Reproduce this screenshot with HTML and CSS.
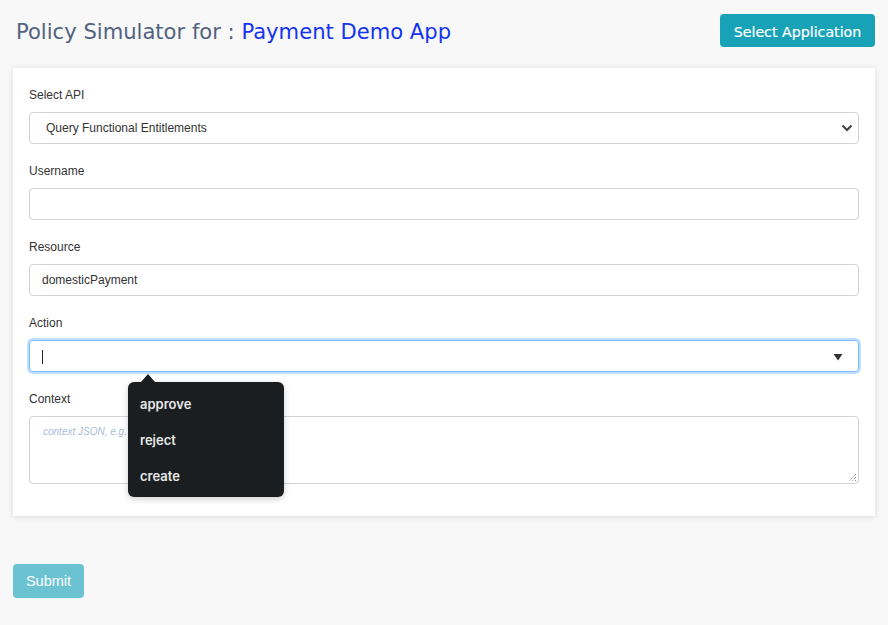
FILE: index.html
```html
<!DOCTYPE html>
<html>
<head>
<meta charset="utf-8">
<link rel="stylesheet" href="styles.css">
</head>
<body>
<div class="page">
  <header class="header">
    <h1 class="title">Policy Simulator for : <span class="app">Payment Demo App</span></h1>
    <button class="btn-select">Select Application</button>
  </header>
  <div class="card">
    <div class="group">
      <label class="label">Select API</label>
      <div class="select-wrap">
        <div class="select">Query Functional Entitlements</div>
        <svg class="chev" width="12" height="8" viewBox="0 0 12 8"><path d="M1.5 1.5 L6 6 L10.5 1.5" fill="none" stroke="#444" stroke-width="2.2"/></svg>
      </div>
    </div>
    <div class="group">
      <label class="label">Username</label>
      <div class="input"></div>
    </div>
    <div class="group">
      <label class="label">Resource</label>
      <div class="input">domesticPayment</div>
    </div>
    <div class="group">
      <label class="label">Action</label>
      <div class="combo-wrap">
        <div class="input focus"><span class="caret"></span></div>
        <svg class="tri" width="10" height="8" viewBox="0 0 10 8"><path d="M0.5 1 L9.5 1 L5 7.5 Z" fill="#333"/></svg>
        <div class="menu">
          <div class="menu-item">approve</div>
          <div class="menu-item">reject</div>
          <div class="menu-item">create</div>
        </div>
      </div>
    </div>
    <div class="group last">
      <label class="label">Context</label>
      <div class="textarea"><span class="ph">context JSON, e.g. {</span>
        <svg class="grip" width="9" height="9" viewBox="0 0 9 9"><path d="M8 1 L1 8 M8 4 L4 8 M8 7 L7 8" stroke="#666" stroke-width="1" stroke-dasharray="1 1"/></svg>
      </div>
    </div>
  </div>
  <div class="footer">
    <button class="btn-submit">Submit</button>
  </div>
</div>
</body>
</html>
```
FILE: styles.css
```css
html, body { margin: 0; padding: 0; }
body {
  background: #f8f8f8;
  width: 888px;
  height: 625px;
  overflow: hidden;
  font-family: "Liberation Sans", Arial, sans-serif;
}
.page { padding: 14px 13px 0 13px; }
.header {
  display: flex;
  justify-content: space-between;
  align-items: center;
  height: 33px;
  padding-left: 3px;
}
.title {
  margin: 0;
  padding-top: 2px;
  font-family: "DejaVu Sans", Verdana, sans-serif;
  font-weight: normal;
  font-size: 21.1px;
  color: #53627f;
}
.app { color: #1434f0; }
.btn-select {
  height: 33px;
  width: 155px;
  border: none;
  border-radius: 4px;
  background: #17a2b8;
  color: #fff;
  font-family: "DejaVu Sans", Verdana, sans-serif;
  font-size: 14.2px;
  padding: 2px 0 0 0;
  -webkit-text-stroke: 0.2px #fff;
}
.card {
  margin-top: 21px;
  background: #fff;
  box-shadow: 0 1px 6px rgba(0,0,0,0.12);
  padding: 18px 16px 32px 16px;
  position: relative;
}
.group { margin-bottom: 18px; }
.group.last { margin-bottom: 0; }
.label {
  display: block;
  font-size: 12px;
  line-height: 18px;
  color: #333;
  margin-bottom: 8px;
}
.select-wrap, .combo-wrap { position: relative; }
.select, .input {
  box-sizing: border-box;
  height: 32px;
  border: 1px solid #ced4da;
  border-radius: 4px;
  font-size: 12px;
  line-height: 30px;
  color: #333;
  padding-left: 12px;
  background: #fff;
}
.select { padding-left: 16px; }
.chev { position: absolute; right: 6px; top: 12px; }
.input.focus {
  border-color: #80bdff;
  box-shadow: 0 0 0 2px rgba(0,123,255,0.25);
}
.caret {
  display: inline-block;
  width: 1px;
  height: 14px;
  background: #222;
  vertical-align: middle;
}
.tri { position: absolute; right: 16px; top: 13px; }
.menu {
  position: absolute;
  left: 99px;
  top: 42px;
  width: 156px;
  height: 115px;
  background: #1b1e21;
  border-radius: 6px;
  box-sizing: border-box;
  padding-top: 12px;
  box-shadow: 0 2px 6px rgba(0,0,0,0.2);
  z-index: 5;
}
.menu::before {
  content: "";
  position: absolute;
  left: 13px;
  top: -8px;
  border-left: 7px solid transparent;
  border-right: 7px solid transparent;
  border-bottom: 8px solid #1b1e21;
}
.menu-item {
  padding-left: 12px;
  height: 36px;
  line-height: 20px;
  font-family: Inter, "Open Sans", sans-serif;
  font-weight: 600;
  font-size: 13px;
  color: #e8e8e8;
}
.textarea {
  position: relative;
  box-sizing: border-box;
  height: 68px;
  border: 1px solid #ced4da;
  border-radius: 4px;
  padding: 4px 13px;
  background: #fff;
}
.ph {
  font-size: 10px;
  font-style: italic;
  color: #a9bdd6;
}
.grip { position: absolute; right: 1px; bottom: 1px; }
.footer { padding-top: 48px; }
.btn-submit {
  width: 71px;
  height: 34px;
  border: none;
  border-radius: 4px;
  background: #6bc3d1;
  color: #fff;
  font-family: "Liberation Sans", Arial, sans-serif;
  font-size: 14.5px;
  padding: 0;
}
```
